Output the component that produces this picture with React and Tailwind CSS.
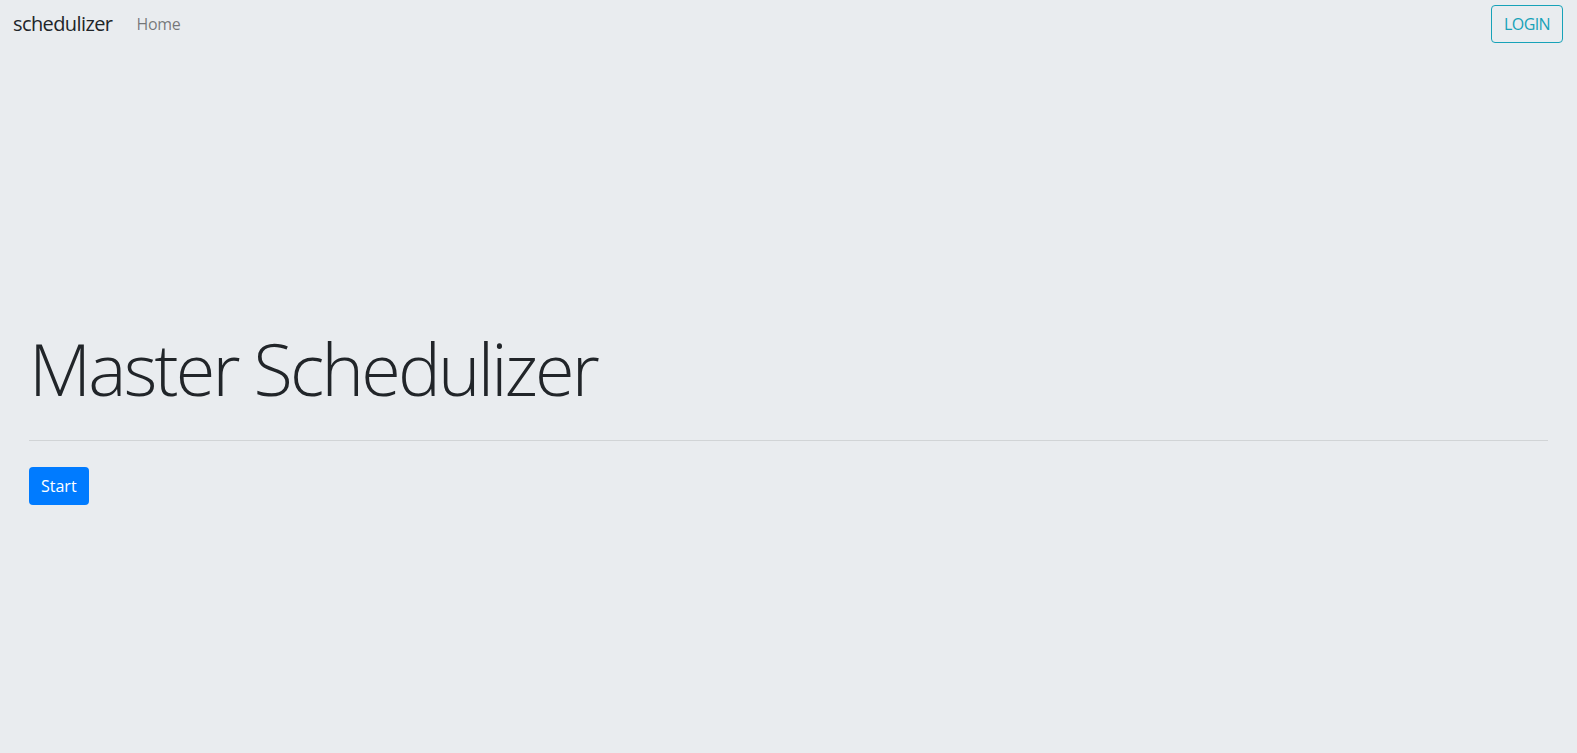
import React from 'react';

const App = () => {
  return (
    <div className="min-h-screen w-full bg-[#e9ecef] text-[#212529]" style={{ fontFamily: '"Open Sans", "Liberation Sans", sans-serif' }}>
      <nav className="flex items-center justify-between h-[48px] pl-[13px] pr-[14px]">
        <div className="flex items-center">
          <a className="text-[20px] leading-none tracking-[-0.6px] text-[#212529] mr-[24px]">schedulizer</a>
          <a className="text-[16px] leading-none tracking-[-0.3px] text-black/50">Home</a>
        </div>
        <button className="h-[38px] px-[12px] border border-[#17a2b8] rounded-[4px] text-[#17a2b8] text-[16px] tracking-[-0.6px] leading-none">
          LOGIN
        </button>
      </nav>

      <main className="px-[29px] pt-[277px]">
        <h1 className="text-[72px] font-light leading-[1.2] tracking-[-2.8px]">Master Schedulizer</h1>
        <hr className="mt-[29px] mb-[26px] border-0 border-t border-black/10" />
        <button className="h-[38px] px-[12px] bg-[#007bff] text-white text-[16px] rounded-[4px] leading-none">
          Start
        </button>
      </main>
    </div>
  );
};

export default App;
